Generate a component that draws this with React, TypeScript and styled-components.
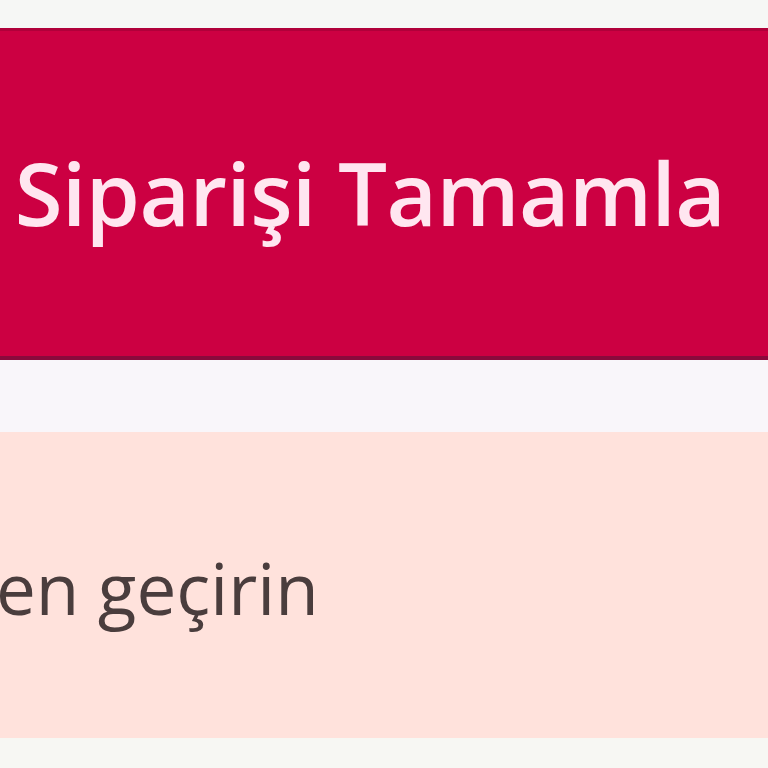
import React from "react";
import styled, { createGlobalStyle } from "styled-components";

const Global = createGlobalStyle`
  html, body { margin: 0; padding: 0; background: #f7f6f6; }
  #root { width: 768px; height: 768px; overflow: hidden; }
`;

const Page = styled.div`
  display: flex;
  flex-direction: column;
  width: 768px;
  height: 768px;
  overflow: hidden;
  background: #f7f6f6;
  font-family: "Open Sans", "Noto Sans", sans-serif;
`;

const TopGap = styled.div`
  height: 28px;
  flex: none;
  background: #f6f7f5;
`;

const SubmitButton = styled.button`
  flex: none;
  height: 332px;
  width: 100%;
  margin: 0;
  padding: 0 28px 4px 0;
  border: none;
  border-top: 3px solid #b0003a;
  border-bottom: 4px solid #8a0a3c;
  background: #cc0042;
  color: #ffe6f0;
  font-family: "Open Sans", "Noto Sans", sans-serif;
  font-weight: 600;
  font-size: 87px;
  letter-spacing: -0.5px;
  display: flex;
  align-items: center;
  justify-content: center;
  cursor: pointer;
`;

const Divider = styled.div`
  flex: none;
  height: 72px;
  background: #f9f6fa;
`;

const Notice = styled.div`
  flex: none;
  height: 306px;
  background: #ffe2dc;
  display: flex;
  align-items: center;
  overflow: hidden;
`;

const NoticeText = styled.span`
  font-family: "Open Sans", "Noto Sans", sans-serif;
  font-size: 71px;
  font-weight: 500;
  color: #4a3d3d;
  margin-left: -4px;
  margin-top: 4px;
  white-space: nowrap;
`;

const Bottom = styled.div`
  flex: 1;
  background: #f7f7f3;
`;

export default function App() {
  return (
    <>
      <Global />
      <Page>
        <TopGap />
        <SubmitButton>Siparişi Tamamla</SubmitButton>
        <Divider />
        <Notice>
          <NoticeText>en geçirin</NoticeText>
        </Notice>
        <Bottom />
      </Page>
    </>
  );
}
